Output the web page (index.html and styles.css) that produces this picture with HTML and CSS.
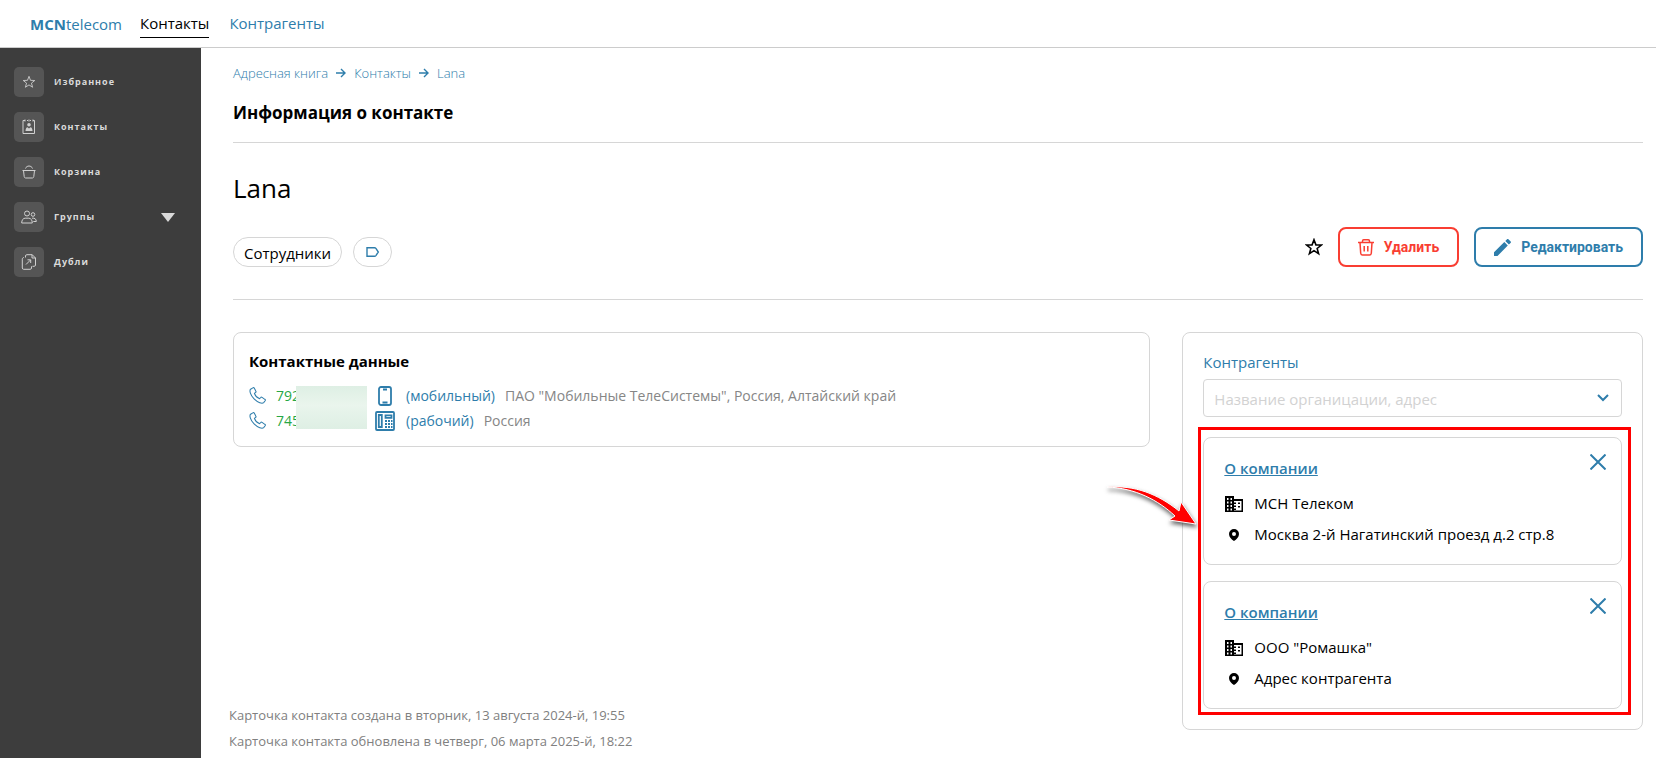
FILE: index.html
```html
<!DOCTYPE html>
<html lang="ru">
<head>
	<meta charset="UTF-8">
	<title>Информация о контакте</title>
	<link rel="stylesheet" href="styles.css">
</head>
<body>
	<svg class="sprite" aria-hidden="true">
		<symbol id="phone" viewBox="0 0 16 16"><path d="M3.6.8 1.5 2.1C.2 3.3 1.200 7.500 4.800 11.200s7.600 4.700 9 3.500l1.400-1.800c.3-.5.2-1-.3-1.300l-2.600-1.800c-.5-.3-1-.3-1.300.1l-1 1.100c-1.800-.6-4.200-3-4.900-5l1.100-.9c.5-.4.5-.9.2-1.400L4.900 1c-.3-.5-.8-.5-1.300-.2Z"/></symbol>
		<symbol id="arrow" viewBox="0 0 10 10"><path d="M0 5h9M5 1l4 4-4 4"/></symbol>
		<symbol id="star" viewBox="0 0 16 16"><path d="m8 1.500 1.700 4.600 4.900.2-3.800 3 1.300 4.700L8 11.300 3.900 14l1.300-4.700-3.800-3 4.900-.2Z"/></symbol>
		<symbol id="cross" viewBox="0 0 16 16"><path d="m.5.5 15 15m0-15-15 15"/></symbol>
		<symbol id="building" viewBox="0 0 18 16"><path d="M0 0h9v3h9v13H0ZM2 2v2h1.500V2Zm3.500 0v2H7V2ZM2 5.500v2h1.500v-2Zm3.500 0v2H7v-2ZM2 9v2h1.500V9Zm3.500 0v2H7V9ZM2 12.500v2h1.500v-2Zm3.500 0v2H7v-2ZM9 5v1.500h2V8H9v1.500h2V11H9v1.500h2V14H9v.5h7.500V5Zm4 1.500h2V8h-2Zm0 3.500h2v1.500h-2Z" fill-rule="evenodd"/></symbol>
		<symbol id="pin" viewBox="0 0 10 12"><path d="M5 0a5 5 0 0 0-5 5c0 3 2.500 5.500 5 7 2.500-1.500 5-4 5-7a5 5 0 0 0-5-5Zm0 3a2 2 0 1 1 0 4 2 2 0 0 1 0-4Z" fill-rule="evenodd"/></symbol>
	</svg>

	<header class="header">
		<a class="logo" href="#"><b>MCN</b>telecom</a>
		<nav class="nav">
			<a class="active" href="#">Контакты</a>
			<a href="#">Контрагенты</a>
		</nav>
	</header>

	<div class="page">
		<nav class="sidebar">
			<a href="#">
				<span class="box"><svg width="14" height="14"><use href="#star"/></svg></span>
				Избранное
			</a>
			<a href="#">
				<span class="box"><svg width="14" height="16" viewBox="0 0 14 16"><path d="M1 1.500h2M5 1.500h1M8 1.500h1M11 1.500h1.500v13H1v-13M3 .5v2M7 .5v2M11 .5v2"/><path class="fill" d="M7 4a1.800 1.800 0 1 1 0 3.600A1.800 1.800 0 0 1 7 4ZM3.500 12c0-2.300 1-3.700 2-3.700L7 9.500l1.500-1.200c1 0 2 1.400 2 3.700Z"/></svg></span>
				Контакты
			</a>
			<a href="#">
				<span class="box"><svg width="14" height="14" viewBox="0 0 14 14"><path d="M.5 5.500h13M1.500 5.500l.7 6c.1 1 .7 1.500 1.500 1.500h6.600c.8 0 1.400-.5 1.500-1.500l.7-6M3.500 3.500C4.500.2 9.500.2 10.500 3.500"/></svg></span>
				Корзина
			</a>
			<a href="#">
				<span class="box"><svg width="16" height="14" viewBox="0 0 16 14"><circle cx="6" cy="3.500" r="2.500"/><circle cx="12" cy="4.500" r="1.800"/><path d="M.7 13c0-3 1.500-4.800 3.500-4.800h3.600c2 0 3.500 1.800 3.500 4.800ZM11 8.200c2.800-.5 4.300 1 4.300 3.300h-3"/></svg></span>
				Группы
				<svg class="caret" width="14" height="9" viewBox="0 0 14 9"><path d="M0 0h14L7 9Z"/></svg>
			</a>
			<a href="#">
				<span class="box"><svg width="16" height="16" viewBox="0 0 16 16"><path d="M4.500 3.500V2c0-.8.5-1.300 1.300-1.300h5.400l3.300 3.300v7c0 .8-.5 1.300-1.300 1.300h-1.700M3 3.500c-1 0-1.700.7-1.700 1.700V14c0 .8.500 1.300 1.300 1.300h6.600c.8 0 1.300-.5 1.300-1.300v-1.700M11 .7V4h3.500M5 10.500l4.500-4.500M6.500 5.800h3.200V9"/></svg></span>
				Дубли
			</a>
		</nav>

		<main class="main">
			<nav class="crumbs">
				<a href="#">Адресная книга</a>
				<svg width="10" height="10"><use href="#arrow"/></svg>
				<a href="#">Контакты</a>
				<svg width="10" height="10"><use href="#arrow"/></svg>
				<a href="#">Lana</a>
			</nav>
			<h1 class="title">Информация о контакте</h1>

			<section class="person">
				<h2>Lana</h2>
				<div class="toolbar">
					<div class="tags">
						<span class="tag">Сотрудники</span>
						<button class="add-tag" aria-label="Добавить метку"><svg width="13" height="10" viewBox="0 0 13 10"><path d="M1 .7h7.500c.6 0 1 .2 1.400.7L12.300 5 9.900 8.600c-.4.500-.8.700-1.400.7H1Z"/></svg></button>
					</div>
					<div class="actions">
						<button class="fav" aria-label="В избранное"><svg width="18" height="18"><use href="#star"/></svg></button>
						<button class="btn delete">
							<svg width="16" height="17" viewBox="0 0 16 17"><path d="M0 3.500h16M4.500 3.500V2c0-.7.4-1.200 1.200-1.200h4.600c.8 0 1.200.5 1.200 1.200v1.500M2 3.500l.7 10.800c.1 1.100.7 1.700 1.700 1.700h7.200c1 0 1.600-.6 1.700-1.700L14 3.500M6.200 7v5.500M9.800 7v5.500"/></svg>
							Удалить
						</button>
						<button class="btn edit">
							<svg width="17" height="17" viewBox="0 0 17 17"><path d="M0 13.300 10.300 3l3.500 3.500L3.500 17H0ZM11.300 2l1.500-1.500c.6-.6 1.300-.6 1.800 0l1.900 1.800c.6.6.6 1.300 0 1.800L14.900 5.500Z"/></svg>
							Редактировать
						</button>
					</div>
				</div>
			</section>

			<div class="columns">
				<div class="left">
					<section class="card contacts">
						<h3>Контактные данные</h3>
						<ul>
							<li>
								<svg class="line" width="17" height="17"><use href="#phone"/></svg>
								<a class="number" href="#">792</a>
								<span class="kind"><svg width="14" height="20" viewBox="0 0 14 20"><rect x="1" y="1" width="12" height="18" rx="2"/><path d="M5 3.500h4M4.500 16.500h5"/></svg></span>
								<span class="type">(мобильный)</span>
								<span class="info">ПАО "Мобильные ТелеСистемы", Россия, Алтайский край</span>
							</li>
							<li>
								<svg class="line" width="17" height="17"><use href="#phone"/></svg>
								<a class="number" href="#">745</a>
								<span class="kind"><svg width="20" height="20" viewBox="0 0 20 20"><rect x="1" y="1" width="18" height="18" rx="1"/><path d="M3.800 4h3v12h-3zM10.500 4.300h6v2.500h-6z"/><path class="keys" d="M10 10h7.500M10 13h7.500M10 16h7.500"/></svg></span>
								<span class="type">(рабочий)</span>
								<span class="info">Россия</span>
							</li>
						</ul>
						<div class="mask"></div>
					</section>
					<div class="history">
						<p>Карточка контакта создана в вторник, 13 августа 2024-й, 19:55</p>
						<p>Карточка контакта обновлена в четверг, 06 марта 2025-й, 18:22</p>
					</div>
				</div>

				<aside class="card agents">
					<label for="agent">Контрагенты</label>
					<div class="combo">
						<input id="agent" type="text" placeholder="Название органицации, адрес">
						<svg width="12" height="8" viewBox="0 0 12 8"><path d="m1 1 5 5 5-5"/></svg>
					</div>
					<div class="companies">
						<article class="company">
							<button class="close" aria-label="Удалить"><svg width="16" height="16"><use href="#cross"/></svg></button>
							<a href="#">О компании</a>
							<p><span class="ico"><svg width="18" height="16"><use href="#building"/></svg></span>МСН Телеком</p>
							<p><span class="ico"><svg width="10" height="12"><use href="#pin"/></svg></span>Москва 2-й Нагатинский проезд д.2 стр.8</p>
						</article>
						<article class="company">
							<button class="close" aria-label="Удалить"><svg width="16" height="16"><use href="#cross"/></svg></button>
							<a href="#">О компании</a>
							<p><span class="ico"><svg width="18" height="16"><use href="#building"/></svg></span>ООО "Ромашка"</p>
							<p><span class="ico"><svg width="10" height="12"><use href="#pin"/></svg></span>Адрес контрагента</p>
						</article>
						<svg class="pointer" width="104" height="56" viewBox="0 0 104 56"><path d="M7 7C35 5 58 14 79 31L81 22 96 44 69 40 75 36C58 20 35 8 7 7Z"/></svg>
					</div>
				</aside>
			</div>
		</main>
	</div>
</body>
</html>
```

FILE: styles.css
```css
*{
	box-sizing: border-box;
}
body{
	margin: 0;
	font: 15px/20px "Open Sans","Noto Sans",sans-serif;
	color: #000;
	background: #fff;
}
h1,h2,h3,p,ul{
	margin: 0;
	padding: 0;
}
a{
	color: #2e7dab;
	text-decoration: none;
}
button{
	padding: 0;
	background: none;
	border: 0;
	cursor: pointer;
}
svg{
	display: block;
	flex: none;
	overflow: visible;
	fill: none;
}
.sprite{
	position: absolute;
	width: 0;
	height: 0;
}

/* header */
.header{
	display: flex;
	align-items: center;
	gap: 18px;
	height: 48px;
	padding: 0 30px;
	border-bottom: 1px solid #ccc;
}
.nav{
	display: flex;
	gap: 20px;
}
.nav a{
	padding: 4px 0;
	border-bottom: 1px solid transparent;
}
.nav .active{
	color: #000;
	border-color: #000;
}

/* sidebar */
.page{
	display: flex;
	min-height: calc(100vh - 48px);
}
.sidebar{
	flex: none;
	display: flex;
	flex-direction: column;
	gap: 15px;
	width: 201px;
	padding: 19px 26px 19px 14px;
	background: #3d3d3d;
}
.sidebar a{
	display: flex;
	align-items: center;
	gap: 10px;
	font-size: 9px;
	font-weight: 700;
	letter-spacing: 1px;
	color: #dadada;
}
.box{
	display: flex;
	align-items: center;
	justify-content: center;
	width: 30px;
	height: 30px;
	border-radius: 5px;
	background: #555;
}
.box svg{
	stroke: #d0d0d0;
}
.box .fill{
	fill: #d0d0d0;
	stroke: none;
}
.caret{
	margin-left: auto;
	fill: #dadada;
}

/* main */
.main{
	flex: 1;
	display: flex;
	flex-direction: column;
	min-width: 0;
	padding: 15px 13px 4px 28px;
}
.crumbs{
	display: flex;
	align-items: center;
	gap: 8px;
	margin-left: 4px;
	font-size: 13px;
	font-weight: 300;
}
.crumbs svg{
	stroke: #2e7dab;
	stroke-width: 1.4;
}
.title{
	margin-left: 4px;
	padding: 18px 0 17px;
	font-size: 17px;
	line-height: 24px;
	border-bottom: 1px solid #d6d6d6;
}
.person{
	margin-left: 4px;
	padding-bottom: 32px;
	border-bottom: 1px solid #d6d6d6;
}
.person h2{
	padding: 27px 0 21px;
	font-size: 26px;
	font-weight: 400;
	line-height: 36px;
}
.toolbar,.tags,.actions{
	display: flex;
	align-items: center;
}
.toolbar{
	justify-content: space-between;
}
.tags{
	gap: 11px;
	padding-top: 9px;
}
.tag,.add-tag{
	display: flex;
	align-items: center;
	height: 30px;
	padding: 2px 10px 0;
	border: 1px solid #d6d6d6;
	border-radius: 15px;
}
.add-tag{
	padding: 0 12px;
}
.add-tag svg{
	stroke: #2e7dab;
	stroke-width: 1.4;
}
.actions{
	gap: 15px;
}
.fav svg{
	stroke: #000;
	stroke-width: 1.4;
}
.btn{
	display: flex;
	align-items: center;
	gap: 10px;
	height: 40px;
	padding: 0 18px;
	font: 700 14px/20px Roboto,sans-serif;
	border: 2px solid;
	border-radius: 8px;
}
.delete{
	color: #f93e32;
}
.delete svg{
	stroke: #f93e32;
	stroke-width: 1.5;
}
.edit{
	color: #2e7dab;
}
.edit svg{
	fill: #2e7dab;
}

/* cards */
.columns{
	flex: 1;
	display: grid;
	grid-template-columns: 2fr 1fr;
	gap: 32px;
	padding-top: 32px;
}
.card{
	border: 1px solid #d6d6d6;
	border-radius: 8px;
}
.left{
	display: flex;
	flex-direction: column;
	justify-content: space-between;
	min-width: 0;
}
.contacts{
	position: relative;
	margin-left: 4px;
	padding: 18px 15px 13px;
}
.contacts h3{
	margin-bottom: 12px;
	font-size: 15px;
	line-height: 20px;
}
.contacts ul{
	list-style: none;
}
.contacts li{
	display: flex;
	align-items: center;
	gap: 10px;
	height: 25px;
	font-size: 14px;
}
.line{
	stroke: #2e7dab;
}
.number{
	width: 88px;
	color: #28a745;
}
.kind{
	display: flex;
	justify-content: center;
	width: 22px;
}
.kind svg{
	stroke: #2e7dab;
	stroke-width: 1.8;
}
.kind .keys{
	stroke-dasharray: 2 1;
}
.type{
	color: #2e7dab;
}
.info{
	color: #868686;
}
.mask{
	position: absolute;
	left: 62px;
	top: 53px;
	width: 71px;
	height: 43px;
	background: linear-gradient(#deefe4,#eaf5ed 45%,#e6f3ea 60%,#deefe4);
}
.history{
	font-size: 13px;
	line-height: 26px;
	color: #808080;
}

/* right column */
.agents{
	align-self: start;
	min-width: 0;
	padding: 19px 20px 20px;
}
.agents label{
	display: block;
	margin-bottom: 7px;
	color: #2e7dab;
}
.combo{
	display: flex;
	align-items: center;
	height: 38px;
	margin-bottom: 20px;
	padding: 0 12px 0 10px;
	border: 1px solid #d6d6d6;
	border-radius: 4px;
}
.combo input{
	flex: 1;
	min-width: 0;
	padding: 2px 0 0;
	font: inherit;
	border: 0;
	outline: 0;
}
.combo input::placeholder{
	color: #d2d2d2;
}
.combo svg{
	stroke: #2e7dab;
	stroke-width: 2;
}
.companies{
	position: relative;
	display: flex;
	flex-direction: column;
	gap: 16px;
}
.companies:after{
	content: "";
	position: absolute;
	top: -10px;
	right: -9px;
	bottom: -6px;
	left: -5px;
	border: 3px solid #f00;
	pointer-events: none;
}
.company{
	position: relative;
	padding: 19px 20px 14px;
	border: 1px solid #d6d6d6;
	border-radius: 8px;
}
.company a{
	display: block;
	width: max-content;
	margin-bottom: 9px;
	line-height: 22px;
	font-weight: 600;
	text-decoration: underline;
}
.company p{
	display: flex;
	align-items: center;
	gap: 10px;
	line-height: 31px;
}
.ico{
	display: flex;
	justify-content: center;
	width: 20px;
}
.ico svg{
	fill: #000;
}
.close{
	position: absolute;
	top: 16px;
	right: 15px;
	stroke: #2e7dab;
	stroke-width: 2;
}
.pointer{
	position: absolute;
	left: -103px;
	top: 43px;
	fill: #f00;
	stroke: #fff;
	filter: drop-shadow(1px 3px 2px rgba(0,0,0,.6));
}
```
